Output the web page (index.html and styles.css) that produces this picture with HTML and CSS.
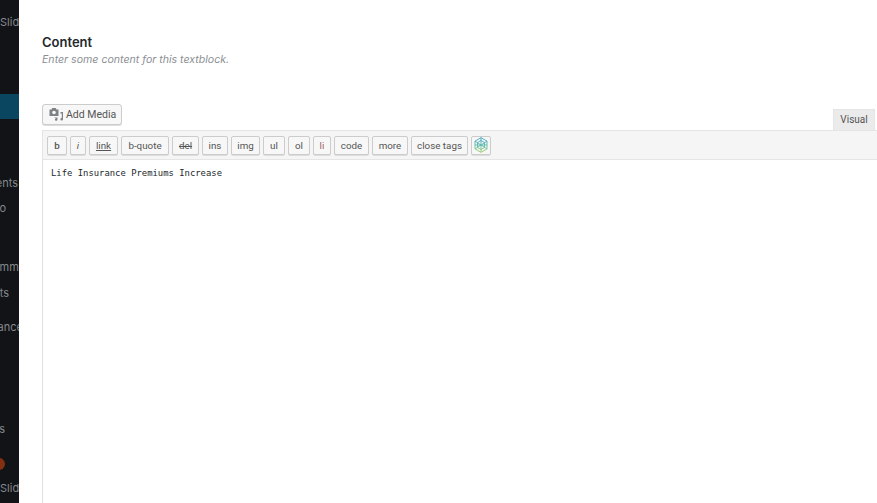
FILE: index.html
```html
<!DOCTYPE html>
<html lang="en">
<head>
<meta charset="utf-8">
<title>Content</title>
<link rel="stylesheet" href="styles.css">
</head>
<body>
<div class="page">
  <nav class="sidebar">
    <div class="item item-start sp-10">Slider</div>
    <div class="item active sp-59"></div>
    <div class="item item-end item-nts sp-52">Comments</div>
    <div class="item item-end item-o">Portfolio</div>
    <div class="item item-end item-mm sp-34">Comments</div>
    <div class="item item-end item-ts sp-1">Posts</div>
    <div class="item item-end item-ance sp-9">Appearance</div>
    <div class="item item-end item-s sp-77">Tools</div>
    <div class="item dot-row sp-9"><span class="dot"></span></div>
    <div class="item item-start">Slider</div>
  </nav>
  <main class="panel">
    <h2 class="title">Content</h2>
    <p class="hint">Enter some content for this textblock.</p>
    <div class="tabs-row">
      <button class="media-btn" type="button">
        <svg class="media-icon" width="15" height="15" viewBox="0 0 15 15" aria-hidden="true">
          <path d="M0.500 2.500h2l.8-1.500h3.400l.8 1.500h2v6.500H0.500z" fill="#7d8287"/>
          <circle cx="5" cy="5.500" r="1.800" fill="#f7f7f7"/>
          <path d="M11.500 5H14v7.200a1.300 1.300 0 1 1-1.200-1.300V6.500h-1.300z" fill="#7d8287"/>
          <path d="M5.500 10.500h3v2a1.300 1.300 0 1 1-1.200-1.300v-.2H5.500z" fill="#7d8287"/>
        </svg>
        <span>Add Media</span>
      </button>
      <div class="tab">Visual</div>
    </div>
    <div class="toolbar">
      <button class="qt qt-b" type="button">b</button>
      <button class="qt qt-i" type="button">i</button>
      <button class="qt qt-link" type="button">link</button>
      <button class="qt qt-quote" type="button">b-quote</button>
      <button class="qt qt-del" type="button">del</button>
      <button class="qt qt-ins" type="button">ins</button>
      <button class="qt qt-img" type="button">img</button>
      <button class="qt qt-ul" type="button">ul</button>
      <button class="qt qt-ol" type="button">ol</button>
      <button class="qt qt-li" type="button">li</button>
      <button class="qt qt-code" type="button">code</button>
      <button class="qt qt-more" type="button">more</button>
      <button class="qt qt-close" type="button">close tags</button>
      <button class="qt qt-hex" type="button">
        <svg width="14" height="16" viewBox="0 0 14 16" aria-hidden="true">
          <defs>
            <linearGradient id="hexgrad" gradientUnits="userSpaceOnUse" x1="0" y1="0" x2="0" y2="16">
              <stop offset="0" stop-color="#3a9fc4"/>
              <stop offset="0.5" stop-color="#58b9ac"/>
              <stop offset="1" stop-color="#a4cc5c"/>
            </linearGradient>
          </defs>
          <g fill="none" stroke="url(#hexgrad)" stroke-width="0.900">
            <path d="M7 .7l6 3.400v7.800l-6 3.400-6-3.400V4.100z"/>
            <path d="M7 3.500l3.500 2v5l-3.500 2-3.500-2v-5z"/>
            <path d="M7 .7v14.600M1 4.100l12 7.800M13 4.100L1 11.900M1 8h12"/>
          </g>
        </svg>
      </button>
    </div>
    <div class="editor">Life Insurance Premiums Increase</div>
  </main>
</div>
</body>
</html>
```
FILE: styles.css
```css
* { box-sizing: border-box; }
html, body { margin: 0; height: 100%; background: #fff; overflow: hidden; }
body { font-family: Inter, "Liberation Sans", sans-serif; }
.page { display: flex; width: 877px; height: 503px; overflow: hidden; }

.sidebar {
  flex: 0 0 19px;
  width: 19px;
  height: 503px;
  overflow: hidden;
  background: #111317;
  color: #85888c;
  font-size: 11px;
  display: flex;
  flex-direction: column;
}
.item { flex: 0 0 25px; height: 25px; line-height: 25px; display: flex; white-space: nowrap; }
.item-start { justify-content: flex-start; }
.item-end { justify-content: flex-end; }
.item-nts { padding-right: 1px; }
.item-o { padding-right: 13px; }
.item-mm { margin-right: -22px; }
.item-ts { padding-right: 10px; }
.item-ance { margin-right: -4px; }
.item-s { padding-right: 14px; }
.active { background: #0a4660; }
.sp-10 { margin-top: 10px; }
.sp-59 { margin-top: 59px; }
.sp-52 { margin-top: 52px; }
.sp-34 { margin-top: 34px; }
.sp-1 { margin-top: 1px; }
.sp-9 { margin-top: 9px; }
.sp-77 { margin-top: 77px; }
.dot-row { align-items: center; justify-content: flex-end; }
.dot { width: 12px; height: 12px; border-radius: 50%; background: #83300f; margin-right: 14px; flex: none; }

.panel { flex: 1 1 auto; min-width: 0; padding: 34px 0 0 23px; display: flex; flex-direction: column; }
.title { margin: 0; font-size: 13px; line-height: 16px; font-weight: 600; color: #23282d; }
.hint { margin: 2px 0 0; font-size: 10.600px; line-height: 15px; font-style: italic; color: #8b8f94; }

.tabs-row { margin-top: 37px; display: flex; align-items: flex-end; justify-content: space-between; height: 26px; }
.media-btn {
  align-self: flex-start;
  height: 21px;
  width: 80px;
  padding: 0 0 0 6px;
  display: flex;
  align-items: center;
  gap: 2px;
  font: 10.500px Roboto, "Liberation Sans", sans-serif;
  color: #555;
  background: #f7f7f7;
  border: 1px solid #ccc;
  border-radius: 3px;
  box-shadow: 0 1px 0 #ddd;
}
.tab {
  width: 42px;
  height: 21px;
  margin-right: 2px;
  background: #ebebeb;
  border: 1px solid #e5e5e5;
  border-bottom: 0;
  color: #555;
  font: 10px/20px Roboto, "Liberation Sans", sans-serif;
  text-align: center;
}

.toolbar {
  height: 30px;
  display: flex;
  align-items: center;
  gap: 3px;
  padding: 0 0 0 4px;
  background: #f5f5f5;
  border: 1px solid #e5e5e5;
  border-right: 0;
}
.qt {
  height: 19px;
  padding: 0;
  display: flex;
  align-items: center;
  justify-content: center;
  font: 9.800px Roboto, "Liberation Sans", sans-serif;
  color: #555;
  background: #f7f7f7;
  border: 1px solid #ccc;
  border-radius: 2px;
  box-shadow: 0 1px 0 #ddd;
  flex: none;
}
.qt-b { width: 20px; font-weight: 500; }
.qt-i { width: 16px; font-style: italic; }
.qt-link { width: 29px; text-decoration: underline; }
.qt-quote { width: 48px; }
.qt-del { width: 27px; text-decoration: line-through; }
.qt-ins { width: 26px; }
.qt-img { width: 29px; }
.qt-ul { width: 22px; }
.qt-ol { width: 22px; }
.qt-li { width: 18px; color: #a0645e; }
.qt-code { width: 35px; }
.qt-more { width: 36px; }
.qt-close { width: 57px; }
.qt-hex { width: 20px; }

.editor {
  flex: 1 1 auto;
  padding: 7px 0 0 8px;
  border-left: 1px solid #e0e0e0;
  font: 8.900px/13px "DejaVu Sans Mono", "Liberation Mono", monospace;
  color: #23282d;
}
```
